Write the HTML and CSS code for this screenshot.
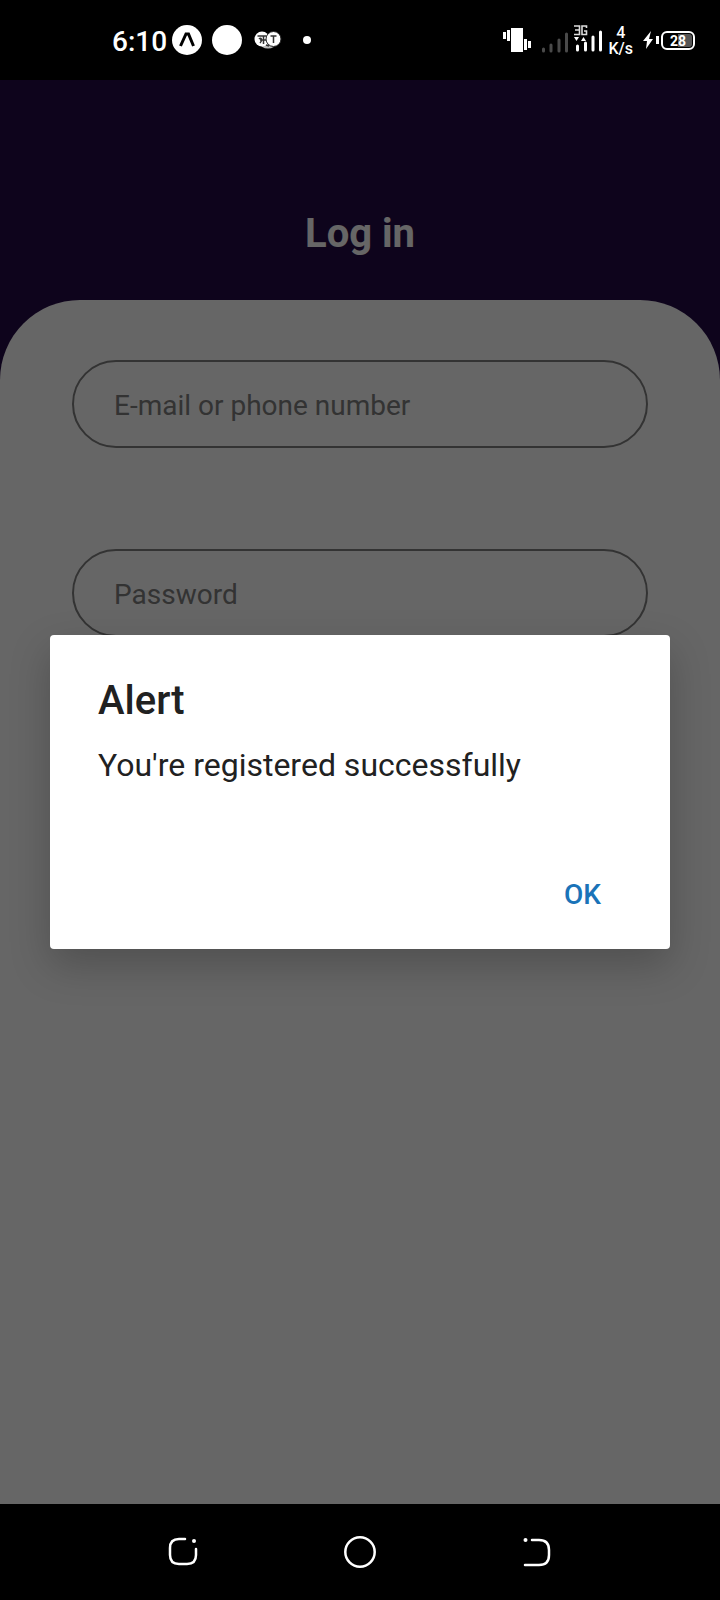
FILE: index.html
```html
<!DOCTYPE html>
<html lang="en">
<head>
<meta charset="utf-8">
<meta name="viewport" content="width=device-width, initial-scale=1">
<title>Log in</title>
<link rel="stylesheet" href="styles.css">
</head>
<body>
<div class="screen">
  <header class="status">
    <div class="status-left">
      <span class="clock">6:10</span>
      <svg class="app-icon" width="30" height="30" viewBox="0 0 30 30"><circle cx="15" cy="15" r="15" fill="#fff"/><path d="M8.500 21 14 9h2.500L21.500 21" fill="none" stroke="#000" stroke-width="3"/></svg>
      <svg class="round-icon" width="30" height="30" viewBox="0 0 30 30"><circle cx="15" cy="15" r="15" fill="#fff"/></svg>
      <svg class="translate-icon" width="28" height="18" viewBox="0 0 28 18"><ellipse cx="14" cy="12" rx="8" ry="5.500" fill="#bbb"/><circle cx="8" cy="8" r="7.500" fill="#fff"/><circle cx="19.500" cy="8" r="7.500" fill="#fff" stroke="#222"/><path d="M3.500 5h9M5 8c2-2 4 1 1 4M9.500 5v8M6 9h6M16.500 5h6M19.500 5v7M12 14l3 1" fill="none" stroke="#333" stroke-width="1.500"/></svg>
      <svg class="dot-icon" width="8" height="8" viewBox="0 0 8 8"><circle cx="4" cy="4" r="4" fill="#fff"/></svg>
    </div>
    <div class="status-right">
      <svg class="vibrate-icon" width="28" height="28" viewBox="0 0 28 28" fill="#fff"><path d="M8 2h12v24H8zM0 6h3v7H0zM4 4h3v11H4zM21 13h3v11h-3zM25 15h3v7h-3z"/></svg>
      <svg class="signal-icon" width="26" height="28" viewBox="0 0 26 28" fill="none" stroke="#4a4a4a" stroke-width="3" stroke-linecap="round"><path d="M1.500 23v2M9 19v6M17 14v11M24.500 8v17"/></svg>
      <svg class="data-icon" width="28" height="32" viewBox="0 0 28 32"><g fill="none" stroke="#ddd" stroke-width="1.600"><path d="M0 2h5.500v8.500H0M1 6h4.500M12.500 4V2H8v8.500h4.500V7H10"/></g><path d="M0 13h5l-2.500 4zM7 17h5l-2.500-4z" fill="#fff"/><path d="M3.500 22v4M11.500 19v7M19 13v13M26.500 8v18" fill="none" stroke="#fff" stroke-width="3" stroke-linecap="round"/></svg>
      <span class="speed">4<br>K/s</span>
      <svg class="charge-icon" width="16" height="18" viewBox="0 0 16 18" fill="#fff"><path d="M8 0 0 10h4L3 18l7-10H6zM13 5h3v8h-3z"/></svg>
      <span class="battery"><span>28</span></span>
    </div>
  </header>
  <div class="app">
    <main class="login">
      <h1 class="login-title">Log in</h1>
      <form class="panel">
        <input class="field" type="text" placeholder="E-mail or phone number" aria-label="E-mail or phone number">
        <input class="field" type="password" placeholder="Password" aria-label="Password">
      </form>
    </main>
    <div class="overlay">
      <section class="alert" role="alertdialog" aria-labelledby="alert-title" aria-describedby="alert-text">
        <h2 class="alert-title" id="alert-title">Alert</h2>
        <p class="alert-text" id="alert-text">You're registered successfully</p>
        <div class="alert-actions"><button class="alert-button" type="button">OK</button></div>
      </section>
    </div>
  </div>
  <nav class="nav">
    <button class="nav-button" type="button" aria-label="Recent apps"><svg width="32" height="32" viewBox="0 0 32 32" fill="none" stroke="#fff" stroke-width="2.500" stroke-linecap="round"><path d="M18 3h-6Q3 3 3 12v7q0 9 9 9h8q9 0 9-9v-6"/><circle cx="27" cy="5" r="2" fill="#fff" stroke="none"/></svg></button>
    <button class="nav-button" type="button" aria-label="Home"><svg width="32" height="32" viewBox="0 0 32 32" fill="none" stroke="#fff" stroke-width="2.500"><circle cx="16" cy="16" r="14.700"/></svg></button>
    <button class="nav-button" type="button" aria-label="Back"><svg width="32" height="32" viewBox="0 0 32 32" fill="none" stroke="#fff" stroke-width="2.500" stroke-linecap="round"><path d="M11 4h7q10 0 10 10v5q0 10-10 10H4"/><circle cx="4.500" cy="4" r="2" fill="#fff" stroke="none"/></svg></button>
  </nav>
</div>
</body>
</html>
```
FILE: styles.css
```css
* {
  box-sizing: border-box;
}

body {
  margin: 0;
  background: #000;
  font-family: Roboto, "Liberation Sans", sans-serif;
}

svg {
  display: block;
  flex: none;
}

.screen {
  display: flex;
  flex-direction: column;
  min-height: 100vh;
}

.status {
  display: flex;
  justify-content: space-between;
  height: 80px;
  padding: 0 25px 0 112px;
  color: #fff;
}

.status-left,
.status-right {
  display: flex;
  align-items: center;
}

.clock {
  font-size: 28px;
  line-height: 32px;
  padding-top: 4px;
  font-weight: 500;
}

.app-icon {
  margin-left: 5px;
}

.round-icon {
  margin-left: 10px;
}

.translate-icon {
  margin-left: 12px;
}

.dot-icon {
  margin-left: 21px;
}

.signal-icon {
  margin-left: 11px;
}

.data-icon {
  margin-left: 6px;
}

.speed {
  margin-left: 6px;
  padding-top: 2px;
  font-size: 16px;
  line-height: 16px;
  font-weight: 500;
  text-align: center;
}

.charge-icon {
  margin-left: 10px;
}

.battery {
  display: flex;
  width: 34px;
  height: 19px;
  margin-left: 2px;
  padding: 1px;
  border: 2px solid #fff;
  border-radius: 6px;
  font-size: 14px;
  line-height: 14px;
  font-weight: 700;
}

.battery span {
  flex: 1;
  border-radius: 3px;
  background: linear-gradient(90deg, #000 50%, #555 50%);
  text-align: center;
}

.app {
  position: relative;
  display: flex;
  flex: 1;
}

.login {
  display: flex;
  flex: 1;
  flex-direction: column;
  background: #250a46;
}

.login-title {
  margin: 0;
  padding: 130px 0 42px;
  color: #fff;
  font-size: 40px;
  line-height: 48px;
  font-weight: 700;
  text-align: center;
}

.panel {
  display: flex;
  flex: 1;
  flex-direction: column;
  gap: 101px;
  padding: 60px 10%;
  border-radius: 80px 80px 0 0;
  background: #fff;
}

.field {
  width: 100%;
  height: 88px;
  padding: 2px 40px 0;
  border: 2px solid #808080;
  border-radius: 44px;
  background: transparent;
  font: 28px/32px Roboto, "Liberation Sans", sans-serif;
}

.field::placeholder {
  color: #808080;
  opacity: 1;
}

.overlay {
  position: absolute;
  inset: 0;
  display: flex;
  align-items: center;
  padding: 0 50px;
  background: rgba(0, 0, 0, 0.6);
}

.alert {
  flex: 1;
  padding: 36px 48px 16px;
  border-radius: 4px;
  background: #fff;
  box-shadow: 0 16px 40px rgba(0, 0, 0, 0.22);
  color: #212121;
}

.alert-title {
  margin: 0 0 15px;
  font-size: 40px;
  line-height: 60px;
  font-weight: 500;
}

.alert-text {
  margin: 0 0 73px;
  font-size: 32px;
  line-height: 38px;
}

.alert-actions {
  display: flex;
  justify-content: flex-end;
}

.alert-button {
  padding: 22px 21px;
  border: 0;
  background: transparent;
  color: #1a73b8;
  font: 500 28px/32px Roboto, "Liberation Sans", sans-serif;
}

.nav {
  display: flex;
  justify-content: space-around;
  align-items: center;
  height: 96px;
  padding: 0 95px;
}

.nav-button {
  padding: 8px;
  border: 0;
  background: transparent;
}
```
